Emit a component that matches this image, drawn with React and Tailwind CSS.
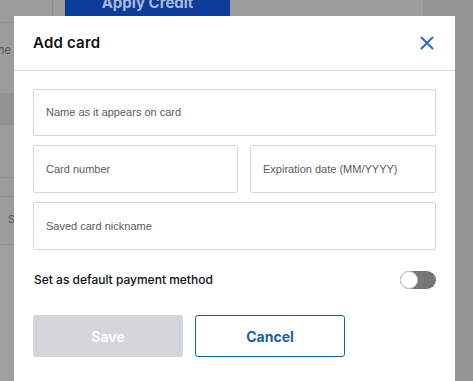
import React from 'react'

function Field({ label, className = '' }) {
  return (
    <div className={`border border-[#d6d6d6] rounded-[2px] flex items-center px-[12px] ${className}`}>
      <span className="text-[11px] text-[#5c5c5c] font-['Liberation_Sans',Arial,sans-serif]">{label}</span>
    </div>
  )
}

export default function App() {
  return (
    <div className="relative w-[473px] h-[381px] overflow-hidden bg-[#9c9c9c] font-['Inter',sans-serif]">
      {/* Page behind the dimmed overlay */}
      <div className="flex h-full">
        <div className="w-[53px] border-r border-[#8e8e8e] flex flex-col">
          <div className="h-[23px] border-b border-[#8f8f8f]" />
          <div className="h-[70px] pt-[19px] text-[11px] text-[#555] -ml-[2px]">ne c</div>
          <div className="h-[32px] bg-[#939393]" />
          <div className="h-[53px] border-b border-[#8f8f8f]" />
          <div className="h-[19px] border-b border-[#8f8f8f]" />
          <div className="h-[48px] border-b border-[#8f8f8f] pl-[8px] pt-[14px] text-[11px] text-[#555]">S</div>
          <div className="flex-1 bg-[#9f9f9f]" />
        </div>
        <div className="flex-1 flex">
          <div className="w-[370px]">
            <div className="ml-[12px] w-[165px] h-[16px] bg-[#0b3c9a] flex items-end justify-center overflow-hidden">
              <span className="text-[#a9b9da] font-bold text-[15px] leading-[15px] mb-[6px]">Apply Credit</span>
            </div>
          </div>
          <div className="flex-1 border-l border-[#939393] bg-[#969696]" />
        </div>
      </div>

      {/* Modal */}
      <div className="absolute left-[14px] top-[16px] w-[441px] h-[380px] bg-white">
        <div className="h-[55px] border-b border-[#d8d8d8] flex items-center justify-between px-[19px]">
          <h2 className="text-[15px] font-semibold text-[#111] tracking-[0.2px]">Add card</h2>
          <svg width="14" height="14" viewBox="0 0 14 14" className="mr-[2px]">
            <path d="M1.5 1.5 L12.5 12.5 M12.5 1.5 L1.5 12.5" stroke="#2b6cc4" strokeWidth="2" strokeLinecap="round" />
          </svg>
        </div>
        <div className="px-[19px] pt-[18px] flex flex-col gap-[9px]">
          <Field label="Name as it appears on card" className="h-[47px]" />
          <div className="flex gap-[12px]">
            <Field label="Card number" className="w-[205px] h-[48px]" />
            <Field label="Expiration date (MM/YYYY)" className="flex-1 h-[48px]" />
          </div>
          <Field label="Saved card nickname" className="h-[48px]" />
        </div>
        <div className="px-[19px] mt-[21px] flex items-center justify-between">
          <span className="text-[12px] font-medium text-[#111] pl-[1px]">Set as default payment method</span>
          <div className="w-[36px] h-[18px] rounded-full bg-[#767676] flex items-center">
            <div className="w-[18px] h-[18px] rounded-full bg-white border border-[#c8c8c8]" />
          </div>
        </div>
        <div className="px-[19px] mt-[26px] flex gap-[12px]">
          <button className="w-[150px] h-[42px] rounded-[3px] bg-[#d3d6da] text-white text-[14px] font-bold">Save</button>
          <button className="w-[150px] h-[42px] rounded-[3px] border border-[#1c5ea6] text-[#1c5ea6] text-[14px] font-bold">Cancel</button>
        </div>
      </div>
    </div>
  )
}
